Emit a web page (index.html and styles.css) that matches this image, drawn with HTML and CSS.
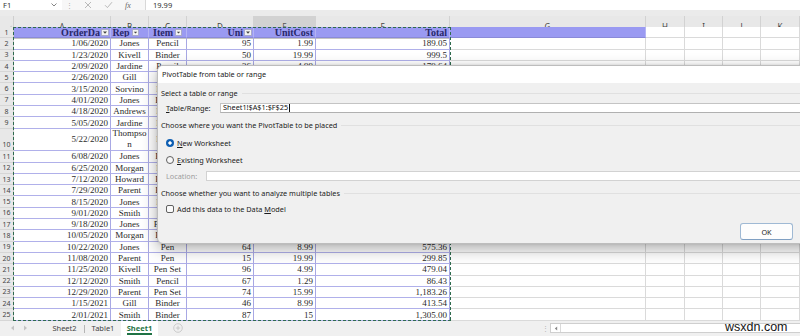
FILE: index.html
```html
<!DOCTYPE html>
<html>
<head>
<meta charset="utf-8">
<title>PivotTable from table or range</title>
<link rel="stylesheet" href="styles.css">
</head>
<body>
<div class="app">
  <div class="fbar">
    <div class="namebox"><span>F1</span><svg class="nb-arrow" width="6" height="4" viewBox="0 0 6 4"><path d="M0.5 0.5L3 3L5.5 0.5" fill="none" stroke="#777" stroke-width="0.9"/></svg></div>
    <div class="fb-dots">⋮</div>
    <div class="fb-icons">
      <span class="fb-ic"><svg width="8" height="8" viewBox="0 0 8 8"><path d="M1 1L7 7M7 1L1 7" stroke="#a8a8a8" stroke-width="0.8"/></svg></span>
      <span class="fb-ic"><svg width="9" height="8" viewBox="0 0 9 8"><path d="M1 4.2L3.4 6.6L8 1.2" fill="none" stroke="#a8a8a8" stroke-width="0.8"/></svg></span>
      <span class="fb-ic fx">fx</span>
    </div>
    <div class="fb-input">19.99</div>
  </div>

  <div class="sheet">
    <div class="row colhdr">
      <div class="corner"><svg width="14" height="11" viewBox="0 0 14 11"><path d="M6 9.5L11.5 9.5L11.5 3.5Z" fill="#b5b5b5"/></svg></div>
      <div class="ch">A</div><div class="ch">B</div><div class="ch">C</div><div class="ch">D</div><div class="ch sel">E</div><div class="ch">F</div><div class="ch">G</div><div class="ch">H</div><div class="ch">I</div><div class="ch">J</div><div class="ch">K</div>
    </div>

    <div class="row">
      <div class="rh">1</div>
      <div class="th r pr">OrderDa<span class="dd"><svg width="6" height="5" viewBox="0 0 6 5"><path d="M1 1.5H5L3 3.8Z" fill="#444"/></svg></span></div>
      <div class="th m pr">Rep<span class="dd"><svg width="6" height="5" viewBox="0 0 6 5"><path d="M1 1.5H5L3 3.8Z" fill="#444"/></svg></span></div>
      <div class="th m">Item<span class="dd"><svg width="6" height="5" viewBox="0 0 6 5"><path d="M1 1.5H5L3 3.8Z" fill="#444"/></svg></span></div>
      <div class="th r pr">Uni<span class="dd"><svg width="6" height="5" viewBox="0 0 6 5"><path d="M1 1.5H5L3 3.8Z" fill="#444"/></svg></span></div>
      <div class="th r">UnitCost</div>
      <div class="th r">Total</div>
      <div class="th"></div>
      <div class="g"></div><div class="g"></div><div class="g"></div><div class="g"></div>
    </div>

    <div class="row"><div class="rh">2</div><div class="c r">1/06/2020</div><div class="c m">Jones</div><div class="c m">Pencil</div><div class="c r">95</div><div class="c r">1.99</div><div class="c r">189.05</div><div class="g"></div><div class="g"></div><div class="g"></div><div class="g"></div><div class="g"></div></div>
    <div class="row"><div class="rh">3</div><div class="c r">1/23/2020</div><div class="c m">Kivell</div><div class="c m">Binder</div><div class="c r">50</div><div class="c r">19.99</div><div class="c r">999.5</div><div class="g"></div><div class="g"></div><div class="g"></div><div class="g"></div><div class="g"></div></div>
    <div class="row"><div class="rh">4</div><div class="c r">2/09/2020</div><div class="c m">Jardine</div><div class="c m">Pencil</div><div class="c r">36</div><div class="c r">4.99</div><div class="c r">179.64</div><div class="g"></div><div class="g"></div><div class="g"></div><div class="g"></div><div class="g"></div></div>
    <div class="row"><div class="rh">5</div><div class="c r">2/26/2020</div><div class="c m">Gill</div><div class="c m">Pen</div><div class="c"></div><div class="c"></div><div class="c"></div><div class="g"></div><div class="g"></div><div class="g"></div><div class="g"></div><div class="g"></div></div>
    <div class="row"><div class="rh">6</div><div class="c r">3/15/2020</div><div class="c m">Sorvino</div><div class="c m">Pencil</div><div class="c"></div><div class="c"></div><div class="c"></div><div class="g"></div><div class="g"></div><div class="g"></div><div class="g"></div><div class="g"></div></div>
    <div class="row"><div class="rh">7</div><div class="c r">4/01/2020</div><div class="c m">Jones</div><div class="c m">Binder</div><div class="c"></div><div class="c"></div><div class="c"></div><div class="g"></div><div class="g"></div><div class="g"></div><div class="g"></div><div class="g"></div></div>
    <div class="row"><div class="rh">8</div><div class="c r">4/18/2020</div><div class="c m">Andrews</div><div class="c m">Pencil</div><div class="c"></div><div class="c"></div><div class="c"></div><div class="g"></div><div class="g"></div><div class="g"></div><div class="g"></div><div class="g"></div></div>
    <div class="row"><div class="rh">9</div><div class="c r">5/05/2020</div><div class="c m">Jardine</div><div class="c m">Pencil</div><div class="c"></div><div class="c"></div><div class="c"></div><div class="g"></div><div class="g"></div><div class="g"></div><div class="g"></div><div class="g"></div></div>
    <div class="row tall"><div class="rh bottom">10</div><div class="c r">5/22/2020</div><div class="c m wrap">Thompso<br>n</div><div class="c m">Pencil</div><div class="c"></div><div class="c"></div><div class="c"></div><div class="g"></div><div class="g"></div><div class="g"></div><div class="g"></div><div class="g"></div></div>
    <div class="row"><div class="rh">11</div><div class="c r">6/08/2020</div><div class="c m">Jones</div><div class="c m">Binder</div><div class="c"></div><div class="c"></div><div class="c"></div><div class="g"></div><div class="g"></div><div class="g"></div><div class="g"></div><div class="g"></div></div>
    <div class="row"><div class="rh">12</div><div class="c r">6/25/2020</div><div class="c m">Morgan</div><div class="c m">Pencil</div><div class="c"></div><div class="c"></div><div class="c"></div><div class="g"></div><div class="g"></div><div class="g"></div><div class="g"></div><div class="g"></div></div>
    <div class="row"><div class="rh">13</div><div class="c r">7/12/2020</div><div class="c m">Howard</div><div class="c m">Binder</div><div class="c"></div><div class="c"></div><div class="c"></div><div class="g"></div><div class="g"></div><div class="g"></div><div class="g"></div><div class="g"></div></div>
    <div class="row"><div class="rh">14</div><div class="c r">7/29/2020</div><div class="c m">Parent</div><div class="c m">Binder</div><div class="c"></div><div class="c"></div><div class="c"></div><div class="g"></div><div class="g"></div><div class="g"></div><div class="g"></div><div class="g"></div></div>
    <div class="row"><div class="rh">15</div><div class="c r">8/15/2020</div><div class="c m">Jones</div><div class="c m">Pencil</div><div class="c"></div><div class="c"></div><div class="c"></div><div class="g"></div><div class="g"></div><div class="g"></div><div class="g"></div><div class="g"></div></div>
    <div class="row"><div class="rh">16</div><div class="c r">9/01/2020</div><div class="c m">Smith</div><div class="c m">Desk</div><div class="c"></div><div class="c"></div><div class="c"></div><div class="g"></div><div class="g"></div><div class="g"></div><div class="g"></div><div class="g"></div></div>
    <div class="row"><div class="rh">17</div><div class="c r">9/18/2020</div><div class="c m">Jones</div><div class="c m">Pen Set</div><div class="c"></div><div class="c"></div><div class="c"></div><div class="g"></div><div class="g"></div><div class="g"></div><div class="g"></div><div class="g"></div></div>
    <div class="row"><div class="rh">18</div><div class="c r">10/05/2020</div><div class="c m">Morgan</div><div class="c m">Binder</div><div class="c"></div><div class="c"></div><div class="c"></div><div class="g"></div><div class="g"></div><div class="g"></div><div class="g"></div><div class="g"></div></div>
    <div class="row"><div class="rh">19</div><div class="c r">10/22/2020</div><div class="c m">Jones</div><div class="c m">Pen</div><div class="c r">64</div><div class="c r">8.99</div><div class="c r">575.36</div><div class="g"></div><div class="g"></div><div class="g"></div><div class="g"></div><div class="g"></div></div>
    <div class="row"><div class="rh">20</div><div class="c r">11/08/2020</div><div class="c m">Parent</div><div class="c m">Pen</div><div class="c r">15</div><div class="c r">19.99</div><div class="c r">299.85</div><div class="g"></div><div class="g"></div><div class="g"></div><div class="g"></div><div class="g"></div></div>
    <div class="row"><div class="rh">21</div><div class="c r">11/25/2020</div><div class="c m">Kivell</div><div class="c m">Pen Set</div><div class="c r">96</div><div class="c r">4.99</div><div class="c r">479.04</div><div class="g"></div><div class="g"></div><div class="g"></div><div class="g"></div><div class="g"></div></div>
    <div class="row"><div class="rh">22</div><div class="c r">12/12/2020</div><div class="c m">Smith</div><div class="c m">Pencil</div><div class="c r">67</div><div class="c r">1.29</div><div class="c r">86.43</div><div class="g"></div><div class="g"></div><div class="g"></div><div class="g"></div><div class="g"></div></div>
    <div class="row"><div class="rh">23</div><div class="c r">12/29/2020</div><div class="c m">Parent</div><div class="c m">Pen Set</div><div class="c r">74</div><div class="c r">15.99</div><div class="c r">1,183.26</div><div class="g"></div><div class="g"></div><div class="g"></div><div class="g"></div><div class="g"></div></div>
    <div class="row"><div class="rh">24</div><div class="c r">1/15/2021</div><div class="c m">Gill</div><div class="c m">Binder</div><div class="c r">46</div><div class="c r">8.99</div><div class="c r">413.54</div><div class="g"></div><div class="g"></div><div class="g"></div><div class="g"></div><div class="g"></div></div>
    <div class="row"><div class="rh">25</div><div class="c r">2/01/2021</div><div class="c m">Smith</div><div class="c m">Binder</div><div class="c r">87</div><div class="c r">15</div><div class="c r">1,305.00</div><div class="g"></div><div class="g"></div><div class="g"></div><div class="g"></div><div class="g"></div></div>
  </div>

  <div class="tabs">
    <div class="tab-nav">
      <svg width="5" height="6" viewBox="0 0 5 6"><path d="M4 0.5L1 3L4 5.5Z" fill="#c4c4c4"/></svg>
      <svg width="5" height="6" viewBox="0 0 5 6"><path d="M1 0.5L4 3L1 5.5Z" fill="#c4c4c4"/></svg>
    </div>
    <div class="tab t-sheet2">Sheet2</div>
    <div class="tab t-table1">Table1</div>
    <div class="tab t-sheet1 active"><span>Sheet1</span></div>
    <div class="tab-add"><svg width="10" height="10" viewBox="0 0 10 10"><circle cx="5" cy="5" r="4.3" fill="none" stroke="#c2c2c2" stroke-width="0.8"/><path d="M5 2.8V7.2M2.8 5H7.2" stroke="#c2c2c2" stroke-width="0.8"/></svg></div>
    <div class="hscroll">
      <span class="hs-dots">⋮</span>
      <div class="hs-track"><span class="hs-btn"><svg width="4" height="5" viewBox="0 0 4 5"><path d="M3.2 0.5L0.8 2.5L3.2 4.5Z" fill="#888"/></svg></span></div>
    </div>
  </div>

  <div class="ants"></div>

  <div class="dialog">
    <div class="dlg-title">PivotTable from table or range</div>
    <div class="dlg-body">
      <div class="group">Select a table or range</div>
      <div class="field">
        <span class="lbl w54"><u>T</u>able/Range:</span>
        <div class="input"><span class="clip">Sheet1!$A$1:$F$25</span><span class="caret"></span></div>
      </div>
      <div class="group g2">Choose where you want the PivotTable to be placed</div>
      <div class="opt o1"><span class="radio on"></span><span><u>N</u>ew Worksheet</span></div>
      <div class="opt o2"><span class="radio"></span><span><u>E</u>xisting Worksheet</span></div>
      <div class="field loc">
        <span class="lbl w40 dis">Location:</span>
        <div class="input"></div>
      </div>
      <div class="group g3">Choose whether you want to analyze multiple tables</div>
      <div class="opt o3"><span class="check"></span><span>Add this data to the Data <u>M</u>odel</span></div>
      <div class="dlg-foot">
        <button class="btn def">OK</button>
      </div>
    </div>
  </div>

  <div class="watermark">wsxdn.com</div>
</div>
</body>
</html>
```

FILE: styles.css
```css
* { box-sizing: border-box; margin: 0; padding: 0; }

html, body {
  width: 800px;
  height: 336px;
  overflow: hidden;
}

body {
  background: #ececec;
  font-family: "Noto Sans", "Liberation Sans", sans-serif;
  color: #222;
}

.app {
  position: relative;
  width: 800px;
  height: 336px;
  overflow: hidden;
  display: flex;
  flex-direction: column;
  background: #ebebeb;
}

/* ---------- formula bar ---------- */
.fbar {
  height: 10px;
  margin-bottom: 6px;
  display: flex;
  background: #f7f7f7;
  font-size: 7.5px;
  color: #333;
  flex-shrink: 0;
}
.namebox {
  width: 62px;
  background: #fff;
  display: flex;
  align-items: center;
  justify-content: space-between;
  padding: 0 5px 0 3px;
}
.fb-dots {
  width: 14px;
  display: flex;
  align-items: center;
  justify-content: center;
  color: #aaa;
  font-size: 7px;
}
.fb-icons {
  display: flex;
  align-items: center;
  padding: 0 7px 0 2px;
}
.fb-ic {
  width: 20px;
  display: flex;
  align-items: center;
  justify-content: center;
}
.fb-ic.fx {
  font-family: "Liberation Serif", serif;
  font-style: italic;
  font-size: 8px;
  color: #666;
}
.fb-input {
  flex: 1;
  background: #fff;
  border-left: 1px solid #d8d8d8;
  padding-left: 7px;
  display: flex;
  align-items: center;
}

/* ---------- sheet grid ---------- */
.sheet {
  display: flex;
  flex-direction: column;
  background: #fff;
  flex-shrink: 0;
}
.row {
  display: grid;
  grid-template-columns: 14px 97px 38px 38px 67px 62px 134px 196px 39px 38px 38px 39px;
  height: 11.3px;
}
.row.colhdr { height: 11px; background: #e8e8e8; }
.row.tall { height: 22.6px; }

.corner {
  background: #e8e8e8;
  border-right: 1px solid #cfcfcf;
  border-bottom: 1px solid #c4c4c4;
}
.ch {
  display: flex;
  align-items: center;
  justify-content: center;
  font-size: 8px;
  line-height: 10px;
  color: #444;
  background: #e8e8e8;
  border-right: 1px solid #d2d2d2;
  border-bottom: 1px solid #c4c4c4;
}
.ch.sel { background: #d2d2d2; color: #555; }

.rh {
  display: flex;
  align-items: center;
  justify-content: center;
  font-size: 7px;
  color: #444;
  background: #e8e8e8;
  border-right: 1px solid #c8c8c8;
  border-bottom: 1px solid #d6d6d6;
}
.rh.bottom { align-items: flex-end; padding-bottom: 1px; }

.c, .th {
  position: relative;
  display: flex;
  align-items: center;
  overflow: hidden;
  white-space: nowrap;
  font-family: "Liberation Serif", "DejaVu Serif", serif;
  padding: 0 2px;
}
.c {
  font-size: 9px;
  color: #2a2a2a;
  border-right: 1px solid #a8a8e4;
  border-bottom: 1px solid #b0b0ea;
}
.th {
  font-size: 10px;
  font-weight: bold;
  color: #28286a;
  background: #9a9af2;
  border-right: 1px solid #b4b4f4;
  border-bottom: 1px solid #8a8ad8;
}
.r { justify-content: flex-end; }
.m { justify-content: center; }
.th.pr { padding-right: 10px; }
.wrap { white-space: normal; text-align: center; line-height: 11px; }

.dd {
  position: absolute;
  right: 1px;
  top: 2px;
  width: 8px;
  height: 7px;
  background: #f3f3f3;
  border: 1px solid #a9a9c9;
  display: flex;
  align-items: center;
  justify-content: center;
}
.th.m .dd { position: static; margin-left: 2px; width: 7px; }

.g {
  border-right: 1px solid #dadada;
  border-bottom: 1px solid #dadada;
  background: #fff;
}

/* ---------- marching ants ---------- */
.ants {
  position: absolute;
  left: 13px;
  top: 27px;
  width: 438px;
  height: 294px;
  pointer-events: none;
  background:
    repeating-linear-gradient(90deg, #2f6b4e 0 3px, transparent 3px 5px) left top / 100% 1px no-repeat,
    repeating-linear-gradient(90deg, #2f6b4e 0 3px, transparent 3px 5px) left bottom / 100% 1px no-repeat,
    repeating-linear-gradient(180deg, #2f6b4e 0 3px, transparent 3px 5px) left top / 1px 100% no-repeat,
    repeating-linear-gradient(180deg, #2f6b4e 0 3px, transparent 3px 5px) right top / 1px 100% no-repeat;
}

/* ---------- sheet tabs ---------- */
.tabs {
  flex: 1;
  display: flex;
  align-items: stretch;
  background: #f0f0f0;
  font-size: 7.5px;
  color: #444;
}
.tab-nav {
  width: 44px;
  display: flex;
  align-items: center;
  gap: 8px;
  padding-left: 10px;
}
.tab {
  display: flex;
  align-items: center;
  justify-content: center;
}
.t-sheet2 { width: 41px; position: relative; }
.t-sheet2::after {
  content: "";
  position: absolute;
  right: 0;
  top: 4px;
  height: 8px;
  border-right: 1px solid #b5b5b5;
}
.t-table1 { width: 36px; }
.t-sheet1 {
  width: 37px;
  background: #fff;
  color: #1f7244;
  font-weight: bold;
}
.t-sheet1 span {
  border-bottom: 2px solid #1f7244;
  line-height: 9px;
  padding-top: 2px;
}
.tab-add {
  width: 40px;
  display: flex;
  align-items: center;
  justify-content: center;
}
.hscroll {
  margin-left: auto;
  width: 259px;
  display: flex;
  align-items: center;
}
.hs-dots {
  width: 9px;
  text-align: center;
  color: #b0b0b0;
  font-size: 7px;
}
.hs-track {
  flex: 1;
  height: 10px;
  background: #fff;
  border: 1px solid #cfcfcf;
  border-right: none;
  display: flex;
}
.hs-btn {
  width: 10px;
  display: flex;
  align-items: center;
  justify-content: center;
  border-right: 1px solid #dadada;
}

/* ---------- dialog ---------- */
.dialog {
  position: absolute;
  left: 157px;
  top: 65px;
  width: 705px;
  background: #f0f0f0;
  border: 1px solid #bdbdbd;
  border-radius: 6px;
  overflow: hidden;
  box-shadow: 0 5px 16px rgba(0, 0, 0, 0.32), 0 0 3px rgba(0, 0, 0, 0.12);
  font-size: 7.3px;
  color: #1b1b1b;
}
.dlg-title {
  height: 17px;
  line-height: 17px;
  background: #fff;
  padding-left: 4px;
}
.dlg-body {
  padding: 0 10px 3px 3px;
  display: flex;
  flex-direction: column;
}
.group {
  height: 10px;
  margin-top: 5px;
  display: flex;
  align-items: center;
  gap: 4px;
  white-space: nowrap;
}
.group::after {
  content: "";
  flex: 1;
  height: 1px;
  background: #e0e0e0;
}
.group.g2, .group.g3 { margin-top: 7px; }

.field {
  height: 10px;
  margin-top: 5px;
  margin-left: 5px;
  display: flex;
  align-items: center;
}
.lbl { white-space: nowrap; }
.w54 { width: 54px; }
.w40 { width: 40px; }
.dis { color: #9d9d9d; }
.input {
  flex: 1;
  height: 10px;
  background: #fff;
  border: 1px solid #c4c4c4;
  border-bottom-color: #b0b0b0;
  overflow: hidden;
  display: flex;
  align-items: flex-start;
  padding-left: 2px;
}
.clip {
  display: block;
  line-height: 10px;
  margin-top: -2px;
  white-space: nowrap;
  color: #111;
}
.caret {
  width: 1px;
  height: 8px;
  background: #111;
  margin-left: 1px;
}
.field.loc .input { border-color: #d2d2d2; }

.opt {
  height: 12px;
  margin-left: 5px;
  display: flex;
  align-items: center;
  gap: 3px;
  white-space: nowrap;
}
.opt.o1 { margin-top: 7px; }
.opt.o2 { margin-top: 5px; }
.opt.o3 { margin-top: 5px; }
.field.loc { margin-top: 5px; }

.radio {
  width: 8px;
  height: 8px;
  border-radius: 50%;
  border: 1px solid #5f5f5f;
  background: #f8f8f8;
}
.radio.on {
  border: none;
  background: radial-gradient(circle, #fff 0 1.4px, #0f5fb3 1.9px);
}
.check {
  width: 8px;
  height: 8px;
  border-radius: 2px;
  border: 1px solid #606060;
  background: #fafafa;
}

.dlg-foot {
  margin-top: 8px;
  height: 17px;
  display: flex;
  justify-content: flex-end;
  padding-right: 58px;
}
.btn {
  width: 53px;
  height: 17px;
  border-radius: 3px;
  border: 1px solid #cfcfcf;
  background: #fdfdfd;
  font-family: inherit;
  font-size: 7.3px;
  color: #1b1b1b;
}
.btn.def {
  border-color: #9fb9d4;
  border-bottom-color: #7f9fc2;
}

/* ---------- watermark ---------- */
.watermark {
  position: absolute;
  left: 725px;
  top: 319px;
  font-family: "Liberation Sans", sans-serif;
  font-size: 12.5px;
  line-height: 16px;
  color: #151515;
}
```
